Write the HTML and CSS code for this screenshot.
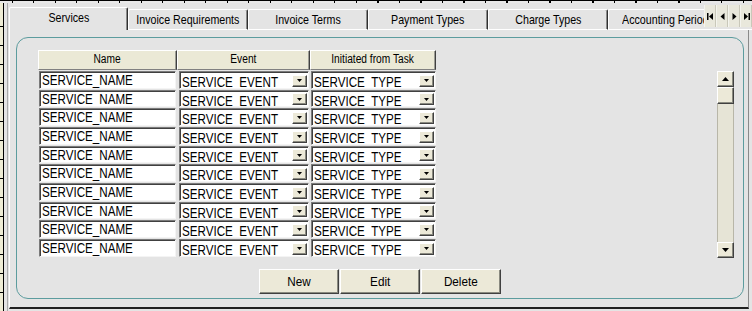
FILE: index.html
```html
<!DOCTYPE html>
<html lang="en">
<head>
    <meta charset="UTF-8">
    <meta name="viewport" content="width=device-width, initial-scale=1.0">
    <title>Services</title>
    <link rel="stylesheet" href="styles.css">
</head>
<body>
    <div class="screen">
        <div class="ruler-top"></div>
        <div class="main">
            <div class="ruler-left"></div>
            <div class="window">

                <div class="tabstrip">
                    <div class="tabs">
                        <div class="tab active"><span class="txt">Services</span></div>
                        <div class="tab"><span class="txt">Invoice Requirements</span></div>
                        <div class="tab"><span class="txt">Invoice Terms</span></div>
                        <div class="tab"><span class="txt">Payment Types</span></div>
                        <div class="tab"><span class="txt">Charge Types</span></div>
                        <div class="tab"><span class="txt">Accounting Periods</span></div>
                    </div>
                    <div class="tab-nav">
                        <span class="nav-btn"><svg width="7" height="7" viewBox="0 0 7 7"><rect x="0" y="0" width="1.5" height="7" fill="#000"/><polygon points="6,0 2,3.5 6,7" fill="#000"/></svg></span>
                        <span class="nav-btn"><svg width="5" height="7" viewBox="0 0 5 7"><polygon points="4.5,0 0.5,3.5 4.5,7" fill="#000"/></svg></span>
                        <span class="nav-btn"><svg width="5" height="7" viewBox="0 0 5 7"><polygon points="0.5,0 4.5,3.5 0.5,7" fill="#000"/></svg></span>
                        <span class="nav-btn"><svg width="7" height="7" viewBox="0 0 7 7"><polygon points="1,0 5,3.5 1,7" fill="#000"/><rect x="5.5" y="0" width="1.5" height="7" fill="#000"/></svg></span>
                    </div>
                </div>

                <div class="panel">
                    <div class="group">
                        <div class="content-row">
                            <div class="grid" id="grid">
                                <div class="head-cell"><span class="txt">Name</span></div>
                                <div class="head-cell"><span class="txt">Event</span></div>
                                <div class="head-cell"><span class="txt">Initiated from Task</span></div>
                            </div>
                            <div class="scrollbar">
                                <div class="sb-btn"><svg width="7" height="4" viewBox="0 0 7 4"><polygon points="0,4 3.5,0 7,4" fill="#000"/></svg></div>
                                <div class="sb-thumb"></div>
                                <div class="sb-track"></div>
                                <div class="sb-btn"><svg width="7" height="4" viewBox="0 0 7 4"><polygon points="0,0 7,0 3.5,4" fill="#000"/></svg></div>
                            </div>
                        </div>
                        <div class="actions">
                            <button class="btn"><span class="txt">New</span></button>
                            <button class="btn"><span class="txt">Edit</span></button>
                            <button class="btn"><span class="txt">Delete</span></button>
                        </div>
                    </div>
                </div>

            </div>
        </div>
    </div>

    <script>
        // Service rows
        const services = Array.from({ length: 10 }, () => ({
            name: "SERVICE_NAME",
            event: "SERVICE_EVENT",
            type: "SERVICE_TYPE"
        }));

        const arrow = `<span class="drop"><svg width="5" height="3" viewBox="0 0 5 3"><polygon points="0,0 5,0 2.5,3" fill="#000"/></svg></span>`;

        function renderRows() {
            const grid = document.getElementById('grid');
            grid.insertAdjacentHTML('beforeend', services.map(s => `
                <div class="cell cell-name"><div class="field"><span class="txt">${s.name}</span></div></div>
                <div class="cell cell-event"><div class="select"><span class="select-text"><span class="txt">${s.event}</span></span>${arrow}</div></div>
                <div class="cell cell-type"><div class="select"><span class="select-text"><span class="txt">${s.type}</span></span>${arrow}</div></div>
            `).join(''));
        }

        renderRows();
    </script>
</body>
</html>
```

FILE: styles.css
```css
* {
    margin: 0;
    padding: 0;
    box-sizing: border-box;
}

body {
    font-family: "Liberation Sans", Arial, sans-serif;
    background-color: #e4e4e4;
    color: #000;
    overflow: hidden;
}

/* the old client draws a narrow Dialog font */
.txt {
    display: inline-block;
    white-space: nowrap;
    transform: scaleX(0.85);
    transform-origin: center;
}

.screen {
    width: 752px;
    height: 311px;
    display: flex;
    flex-direction: column;
}

.ruler-top {
    height: 3px;
    flex: none;
    background:
        linear-gradient(#000, #000) top / 100% 1px no-repeat,
        repeating-linear-gradient(90deg, #000 0 1px, transparent 1px 21.5px) 12px 0,
        #e8e8e8;
}

.main {
    display: flex;
    flex: 1;
}

.ruler-left {
    width: 4px;
    flex: none;
    border-right: 1px solid #000;
    background:
        repeating-linear-gradient(180deg, transparent 0 17px, #000 17px 18px, transparent 18px 19px) 0 6px,
        #eeecd4;
}

.window {
    flex: 1;
    margin-left: 3px;
    border-left: 1px solid #a9a9a9;
    display: flex;
    flex-direction: column;
    min-width: 0;
}

/* Tabs */
.tabstrip {
    height: 27px;
    flex: none;
    display: flex;
    align-items: flex-end;
    padding-left: 1px;
}

.tabs {
    flex: 1;
    display: flex;
    align-items: flex-end;
    overflow: hidden;
    height: 100%;
}

.tab {
    flex: none;
    width: 120px;
    height: 21px;
    display: flex;
    justify-content: center;
    align-items: center;
    padding-bottom: 1px;
    font-size: 13px;
    background: #e4e4e4;
    border-top: 1px solid #fff;
    border-left: 1px solid #fff;
    border-right: 1px solid #303030;
    border-bottom: 1px solid #fff;
    box-shadow: inset -1px 0 #8a8a8a;
    border-radius: 2px 2px 0 0;
}

.tab .txt {
    transform: scaleX(0.82);
}

.tab:first-child {
    width: 119px;
}

.tab.active {
    height: 23px;
    padding-bottom: 3px;
    border-bottom: none;
}

.tab-nav {
    flex: none;
    width: 48px;
    height: 100%;
    display: flex;
    align-items: flex-start;
    padding-top: 2px;
    border-bottom: 1px solid #fff;
}

.nav-btn {
    width: 12px;
    height: 22px;
    display: flex;
    align-items: center;
    justify-content: center;
    background: #e9e8dc;
    border-left: 1px solid #f4f4ee;
    border-right: 1px solid #c9c8ba;
}

/* Panel */
.panel {
    flex: 1;
    margin: 0 3px 3px 1px;
    padding: 7px 4px 8px 6px;
    border-left: 1px solid #fff;
    border-right: 1px solid #8a8a8a;
    border-bottom: 2px solid #202020;
    display: flex;
}

.group {
    flex: 1;
    border: 1px solid #5c9c9e;
    border-radius: 12px;
    padding: 12px 0 4px 21px;
    display: flex;
    flex-direction: column;
}

.content-row {
    display: flex;
    align-items: flex-start;
}

/* Grid */
.grid {
    display: grid;
    grid-template-columns: 139px 133px 126px;
    grid-template-rows: 20px;
    grid-auto-rows: 18.67px;
}

.head-cell {
    display: flex;
    justify-content: center;
    background: #ebe9d6;
    border-top: 1px solid #fff;
    border-left: 1px solid #fff;
    border-right: 1px solid #404040;
    border-bottom: 1px solid #808080;
    box-shadow: inset -1px 0 #9c9c94;
    font-size: 12px;
    line-height: 17px;
}

.cell {
    padding-top: 1px;
}

.cell-name {
    padding-left: 1px;
    padding-right: 1px;
}

.cell-event {
    padding-left: 2px;
    padding-right: 1px;
}

.cell-type {
    padding-left: 1px;
}

.field,
.select {
    height: 100%;
    background: #fff;
    border-top: 1px solid #7a7a7a;
    border-left: 1px solid #7a7a7a;
    border-right: 1px solid #f4f4f4;
    border-bottom: 1px solid #f4f4f4;
    box-shadow: inset 1px 1px #404040;
    font-size: 14px;
    line-height: 16px;
    white-space: nowrap;
    overflow: hidden;
}

.field .txt,
.select .txt {
    transform: scaleX(0.83);
    transform-origin: left center;
}

.field {
    padding-left: 2px;
}

.select {
    display: flex;
    padding-left: 2px;
}

.select-text {
    flex: 1;
    padding-top: 2px;
    overflow: hidden;
}

.drop {
    flex: none;
    align-self: flex-end;
    width: 15px;
    height: 12px;
    margin: 0 1px 1px 0;
    display: flex;
    align-items: center;
    justify-content: center;
    background: #ece9d8;
    border-top: 1px solid #fff;
    border-left: 1px solid #fff;
    border-right: 1px solid #404040;
    border-bottom: 1px solid #404040;
    box-shadow: inset -1px -1px #8a8a80;
}

/* Scrollbar */
.scrollbar {
    width: 17px;
    height: 187px;
    margin: 21px 9px 0 auto;
    display: flex;
    flex-direction: column;
    background: #e6e4d6;
    border-left: 1px solid #b8b6a8;
    border-right: 1px solid #b8b6a8;
}

.sb-btn,
.sb-thumb {
    flex: none;
    height: 16px;
    margin: 0 -1px;
    display: flex;
    align-items: center;
    justify-content: center;
    background: #ece9d8;
    border-top: 1px solid #fff;
    border-left: 1px solid #fff;
    border-right: 1px solid #404040;
    border-bottom: 1px solid #404040;
    box-shadow: inset -1px -1px #8a8a80;
}

.sb-thumb {
    height: 17px;
}

.sb-track {
    flex: 1;
}

/* Buttons */
.actions {
    display: flex;
    justify-content: center;
    gap: 1px;
    margin-top: 11px;
    padding-right: 21px;
}

.btn {
    width: 80px;
    height: 25px;
    display: flex;
    align-items: center;
    justify-content: center;
    font-family: inherit;
    font-size: 13px;
    color: #000;
    background: #ece9d8;
    border: 1px solid;
    border-color: #fff #404040 #404040 #fff;
    box-shadow: inset -1px -1px #8a8a80;
}

.btn .txt {
    transform: scaleX(0.9);
}
```
